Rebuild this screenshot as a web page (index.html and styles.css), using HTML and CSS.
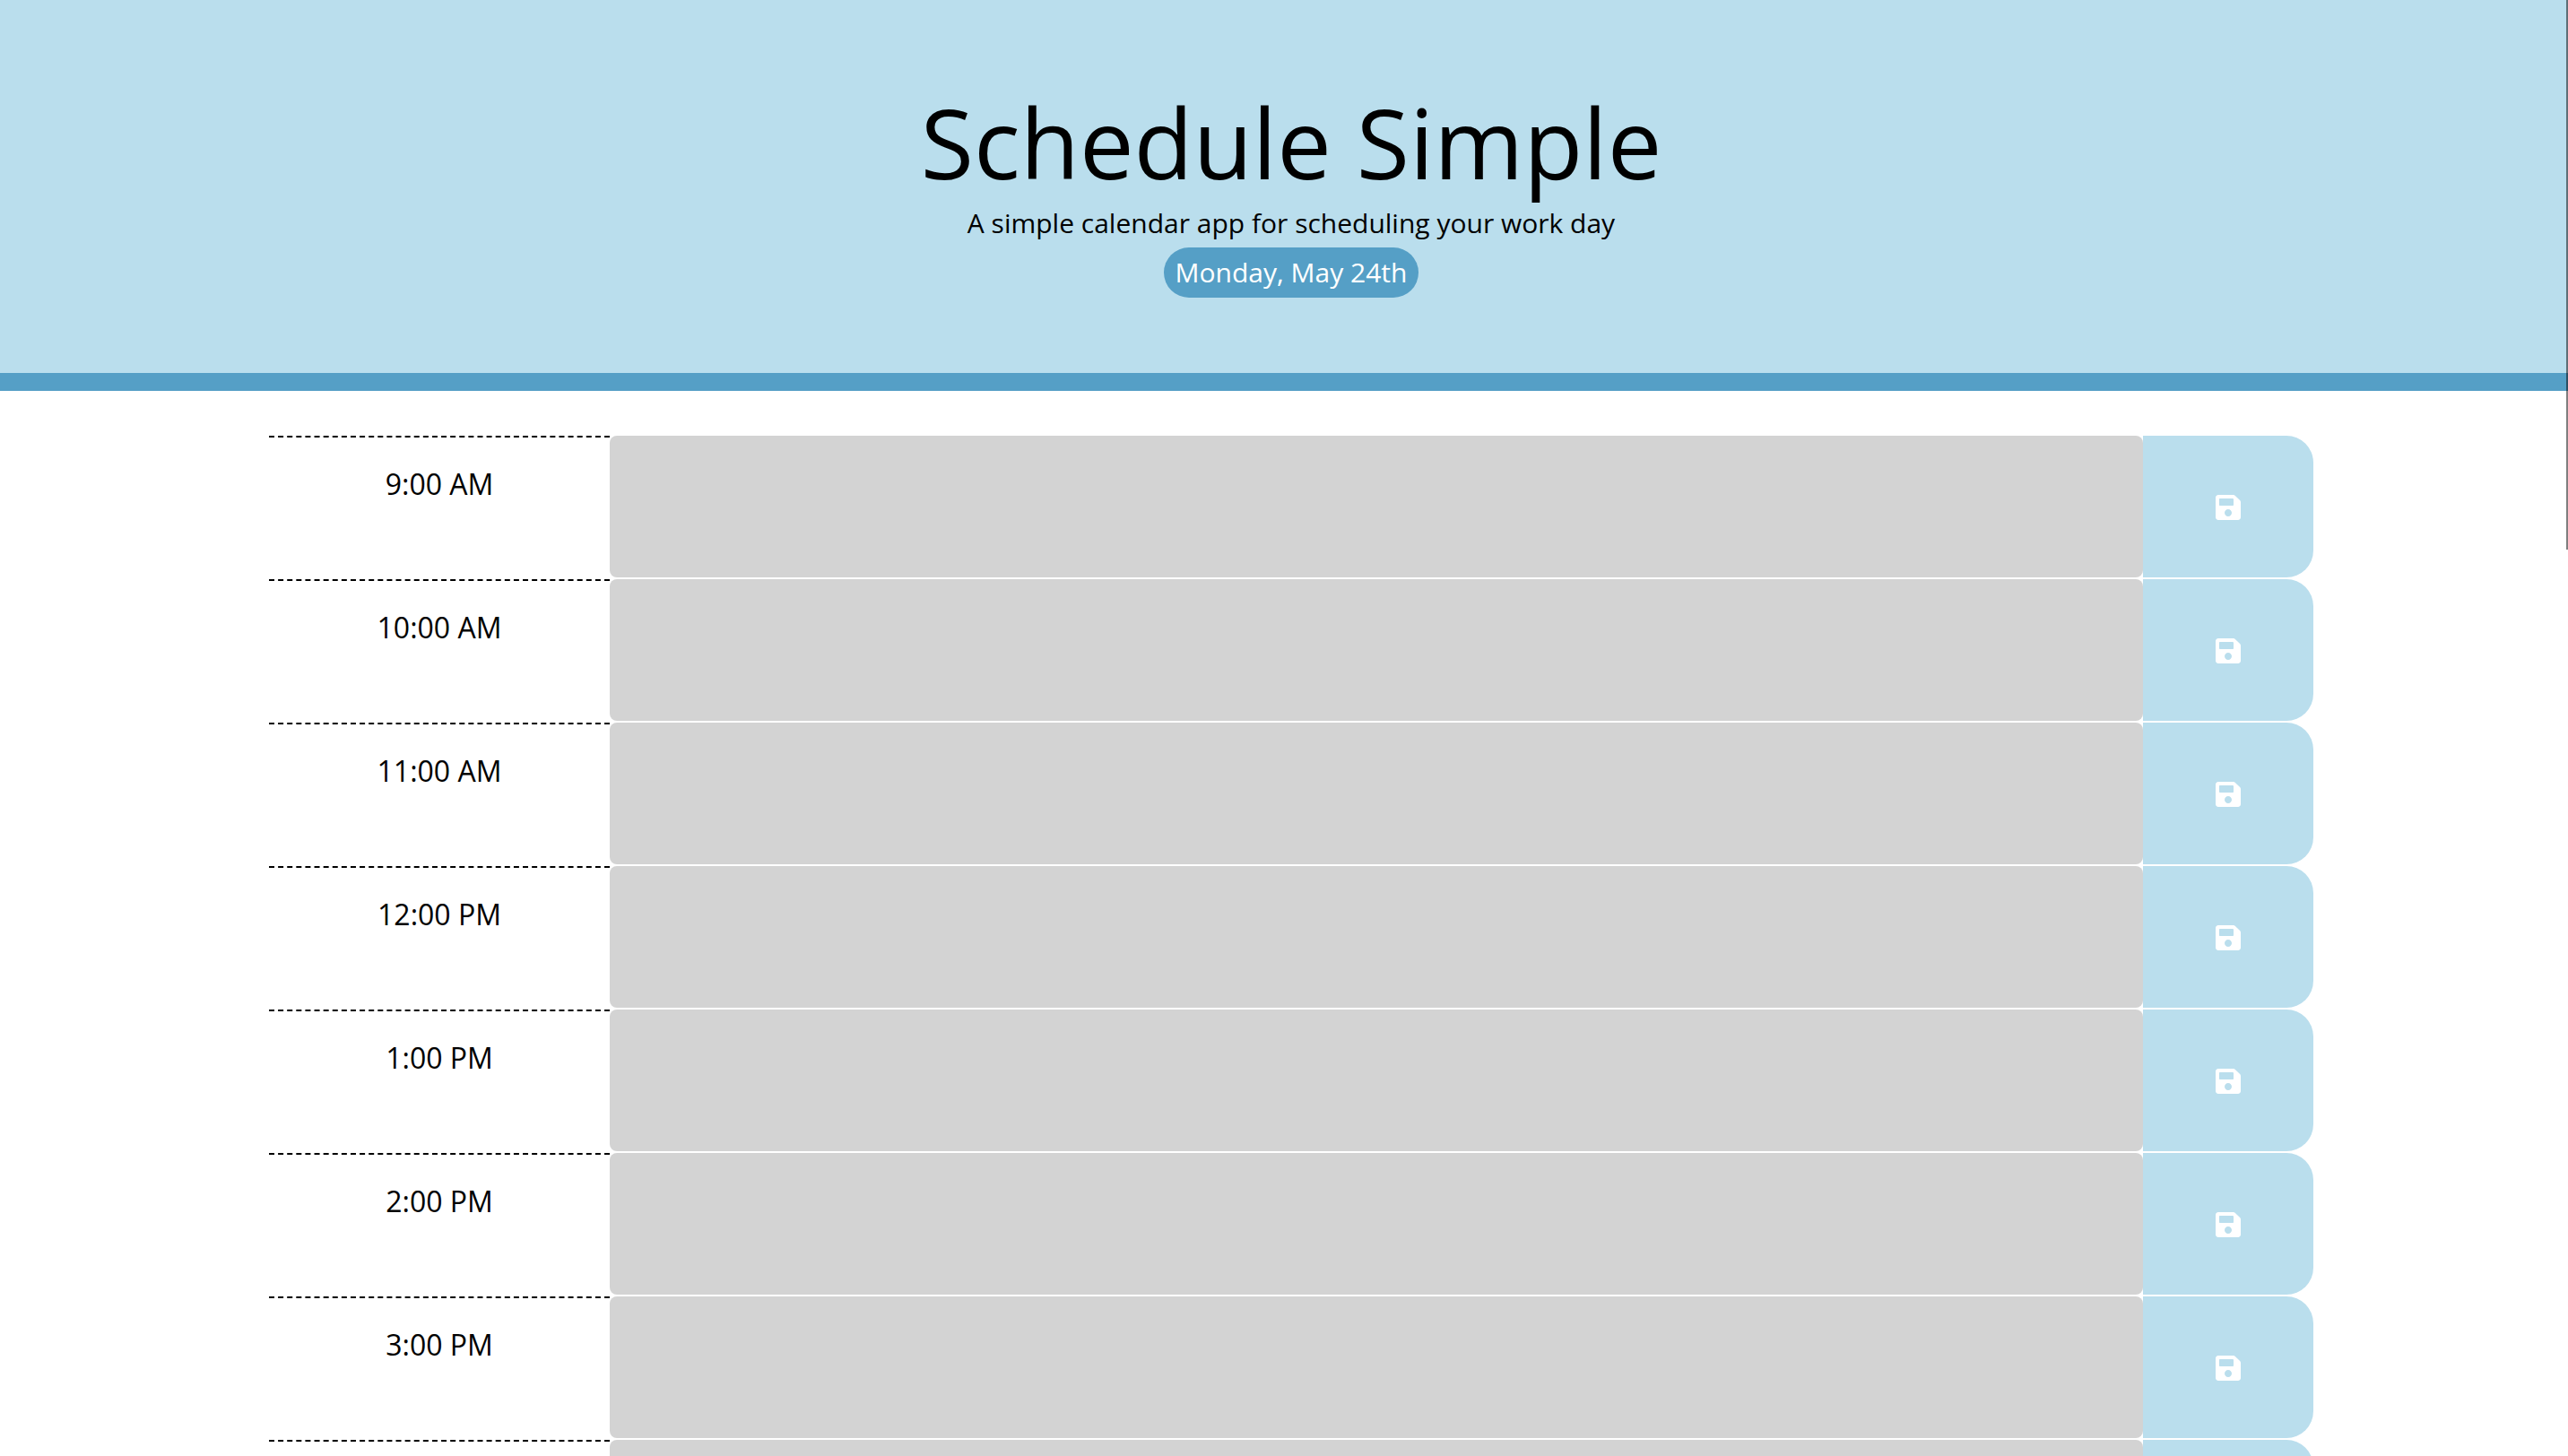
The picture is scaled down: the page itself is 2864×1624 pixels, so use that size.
FILE: index.html
```html
<!DOCTYPE html>
<html lang="en">
<head>
  <meta charset="UTF-8">
  <meta name="viewport" content="width=device-width, initial-scale=1.0">
  <title>Schedule Simple</title>
  <link rel="stylesheet" href="styles.css">
</head>
<body>
  <!-- Header -->
  <header class="jumbotron">
    <h1 class="display">Schedule Simple</h1>
    <p class="lead">A simple calendar app for scheduling your work day</p>
    <p class="current-day">Monday, May 24th</p>
  </header>

  <!-- Time blocks -->
  <div class="container">
    <div class="row">
      <div class="hour">9:00 AM</div>
      <textarea class="description"></textarea>
      <button class="save-btn"><svg class="save-icon" viewBox="0 0 448 512"><path d="M433.941 129.941l-83.882-83.882A48 48 0 0 0 316.118 32H48C21.49 32 0 53.49 0 80v352c0 26.51 21.49 48 48 48h352c26.51 0 48-21.49 48-48V163.882a48 48 0 0 0-14.059-33.941zM224 416c-35.346 0-64-28.654-64-64 0-35.346 28.654-64 64-64s64 28.654 64 64c0 35.346-28.654 64-64 64zm96-304.52V212c0 6.627-5.373 12-12 12H76c-6.627 0-12-5.373-12-12V108c0-6.627 5.373-12 12-12h228.52c3.183 0 6.235 1.264 8.485 3.515l3.48 3.48A11.996 11.996 0 0 1 320 111.48z"/></svg></button>
    </div>
    <div class="row">
      <div class="hour">10:00 AM</div>
      <textarea class="description"></textarea>
      <button class="save-btn"><svg class="save-icon" viewBox="0 0 448 512"><path d="M433.941 129.941l-83.882-83.882A48 48 0 0 0 316.118 32H48C21.49 32 0 53.49 0 80v352c0 26.51 21.49 48 48 48h352c26.51 0 48-21.49 48-48V163.882a48 48 0 0 0-14.059-33.941zM224 416c-35.346 0-64-28.654-64-64 0-35.346 28.654-64 64-64s64 28.654 64 64c0 35.346-28.654 64-64 64zm96-304.52V212c0 6.627-5.373 12-12 12H76c-6.627 0-12-5.373-12-12V108c0-6.627 5.373-12 12-12h228.52c3.183 0 6.235 1.264 8.485 3.515l3.48 3.48A11.996 11.996 0 0 1 320 111.48z"/></svg></button>
    </div>
    <div class="row">
      <div class="hour">11:00 AM</div>
      <textarea class="description"></textarea>
      <button class="save-btn"><svg class="save-icon" viewBox="0 0 448 512"><path d="M433.941 129.941l-83.882-83.882A48 48 0 0 0 316.118 32H48C21.49 32 0 53.49 0 80v352c0 26.51 21.49 48 48 48h352c26.51 0 48-21.49 48-48V163.882a48 48 0 0 0-14.059-33.941zM224 416c-35.346 0-64-28.654-64-64 0-35.346 28.654-64 64-64s64 28.654 64 64c0 35.346-28.654 64-64 64zm96-304.52V212c0 6.627-5.373 12-12 12H76c-6.627 0-12-5.373-12-12V108c0-6.627 5.373-12 12-12h228.52c3.183 0 6.235 1.264 8.485 3.515l3.48 3.48A11.996 11.996 0 0 1 320 111.48z"/></svg></button>
    </div>
    <div class="row">
      <div class="hour">12:00 PM</div>
      <textarea class="description"></textarea>
      <button class="save-btn"><svg class="save-icon" viewBox="0 0 448 512"><path d="M433.941 129.941l-83.882-83.882A48 48 0 0 0 316.118 32H48C21.49 32 0 53.49 0 80v352c0 26.51 21.49 48 48 48h352c26.51 0 48-21.49 48-48V163.882a48 48 0 0 0-14.059-33.941zM224 416c-35.346 0-64-28.654-64-64 0-35.346 28.654-64 64-64s64 28.654 64 64c0 35.346-28.654 64-64 64zm96-304.52V212c0 6.627-5.373 12-12 12H76c-6.627 0-12-5.373-12-12V108c0-6.627 5.373-12 12-12h228.52c3.183 0 6.235 1.264 8.485 3.515l3.48 3.48A11.996 11.996 0 0 1 320 111.48z"/></svg></button>
    </div>
    <div class="row">
      <div class="hour">1:00 PM</div>
      <textarea class="description"></textarea>
      <button class="save-btn"><svg class="save-icon" viewBox="0 0 448 512"><path d="M433.941 129.941l-83.882-83.882A48 48 0 0 0 316.118 32H48C21.49 32 0 53.49 0 80v352c0 26.51 21.49 48 48 48h352c26.51 0 48-21.49 48-48V163.882a48 48 0 0 0-14.059-33.941zM224 416c-35.346 0-64-28.654-64-64 0-35.346 28.654-64 64-64s64 28.654 64 64c0 35.346-28.654 64-64 64zm96-304.52V212c0 6.627-5.373 12-12 12H76c-6.627 0-12-5.373-12-12V108c0-6.627 5.373-12 12-12h228.52c3.183 0 6.235 1.264 8.485 3.515l3.48 3.48A11.996 11.996 0 0 1 320 111.48z"/></svg></button>
    </div>
    <div class="row">
      <div class="hour">2:00 PM</div>
      <textarea class="description"></textarea>
      <button class="save-btn"><svg class="save-icon" viewBox="0 0 448 512"><path d="M433.941 129.941l-83.882-83.882A48 48 0 0 0 316.118 32H48C21.49 32 0 53.49 0 80v352c0 26.51 21.49 48 48 48h352c26.51 0 48-21.49 48-48V163.882a48 48 0 0 0-14.059-33.941zM224 416c-35.346 0-64-28.654-64-64 0-35.346 28.654-64 64-64s64 28.654 64 64c0 35.346-28.654 64-64 64zm96-304.52V212c0 6.627-5.373 12-12 12H76c-6.627 0-12-5.373-12-12V108c0-6.627 5.373-12 12-12h228.52c3.183 0 6.235 1.264 8.485 3.515l3.48 3.48A11.996 11.996 0 0 1 320 111.48z"/></svg></button>
    </div>
    <div class="row">
      <div class="hour">3:00 PM</div>
      <textarea class="description"></textarea>
      <button class="save-btn"><svg class="save-icon" viewBox="0 0 448 512"><path d="M433.941 129.941l-83.882-83.882A48 48 0 0 0 316.118 32H48C21.49 32 0 53.49 0 80v352c0 26.51 21.49 48 48 48h352c26.51 0 48-21.49 48-48V163.882a48 48 0 0 0-14.059-33.941zM224 416c-35.346 0-64-28.654-64-64 0-35.346 28.654-64 64-64s64 28.654 64 64c0 35.346-28.654 64-64 64zm96-304.52V212c0 6.627-5.373 12-12 12H76c-6.627 0-12-5.373-12-12V108c0-6.627 5.373-12 12-12h228.52c3.183 0 6.235 1.264 8.485 3.515l3.48 3.48A11.996 11.996 0 0 1 320 111.48z"/></svg></button>
    </div>
    <div class="row">
      <div class="hour"></div>
      <textarea class="description"></textarea>
      <button class="save-btn"></button>
    </div>
  </div>

  <!-- overlay scrollbar -->
  <div class="scroll-thumb"></div>
</body>
</html>
```

FILE: styles.css
```css
html {
  height: 100%;
  overflow: hidden;
}

body {
  height: 100%;
  margin: 0;
  overflow: hidden;
  font-family: "Open Sans", sans-serif;
  font-size: 32px;
  line-height: 1.5;
  color: #000;
  background: #fff;
}

.jumbotron {
  box-sizing: content-box;
  height: 324px;
  padding: 92px 0 0 16px;
  text-align: center;
  background: #badeed;
  border-bottom: 20px solid #559fc6;
}

.display {
  margin: 0;
  font-size: 108px;
  font-weight: 400;
  line-height: 133px;
}

.lead {
  margin: 0;
  font-size: 30px;
  line-height: 48px;
}

.current-day {
  display: table;
  margin: 3px auto 0;
  padding: 5px 13px;
  font-size: 30px;
  line-height: 46px;
  color: #fff;
  background: #559fc6;
  border-radius: 28px;
}

.container {
  width: 2280px;
  margin: 50px auto 0;
  transform: translateX(8px);
}

.row {
  display: flex;
  height: 160px;
}

.hour {
  width: 380px;
  height: 158px;
  padding-top: 28px;
  box-sizing: border-box;
  text-align: center;
  border-top: 2px dashed #000;
}

.description {
  display: block;
  width: 1710px;
  height: 158px;
  padding: 0;
  border: none;
  border-radius: 8px;
  background: #d3d3d3;
  resize: none;
}

.save-btn {
  display: flex;
  align-items: center;
  justify-content: center;
  width: 190px;
  height: 158px;
  padding: 2px 0 0;
  border: none;
  border-radius: 0 30px 30px 0;
  background: #badeed;
}

.save-icon {
  width: 28px;
  height: 32px;
  fill: #fff;
}

.scroll-thumb {
  position: absolute;
  top: 0;
  right: 0;
  width: 2px;
  height: 613px;
  background: rgba(0, 0, 0, 0.5);
}
```
